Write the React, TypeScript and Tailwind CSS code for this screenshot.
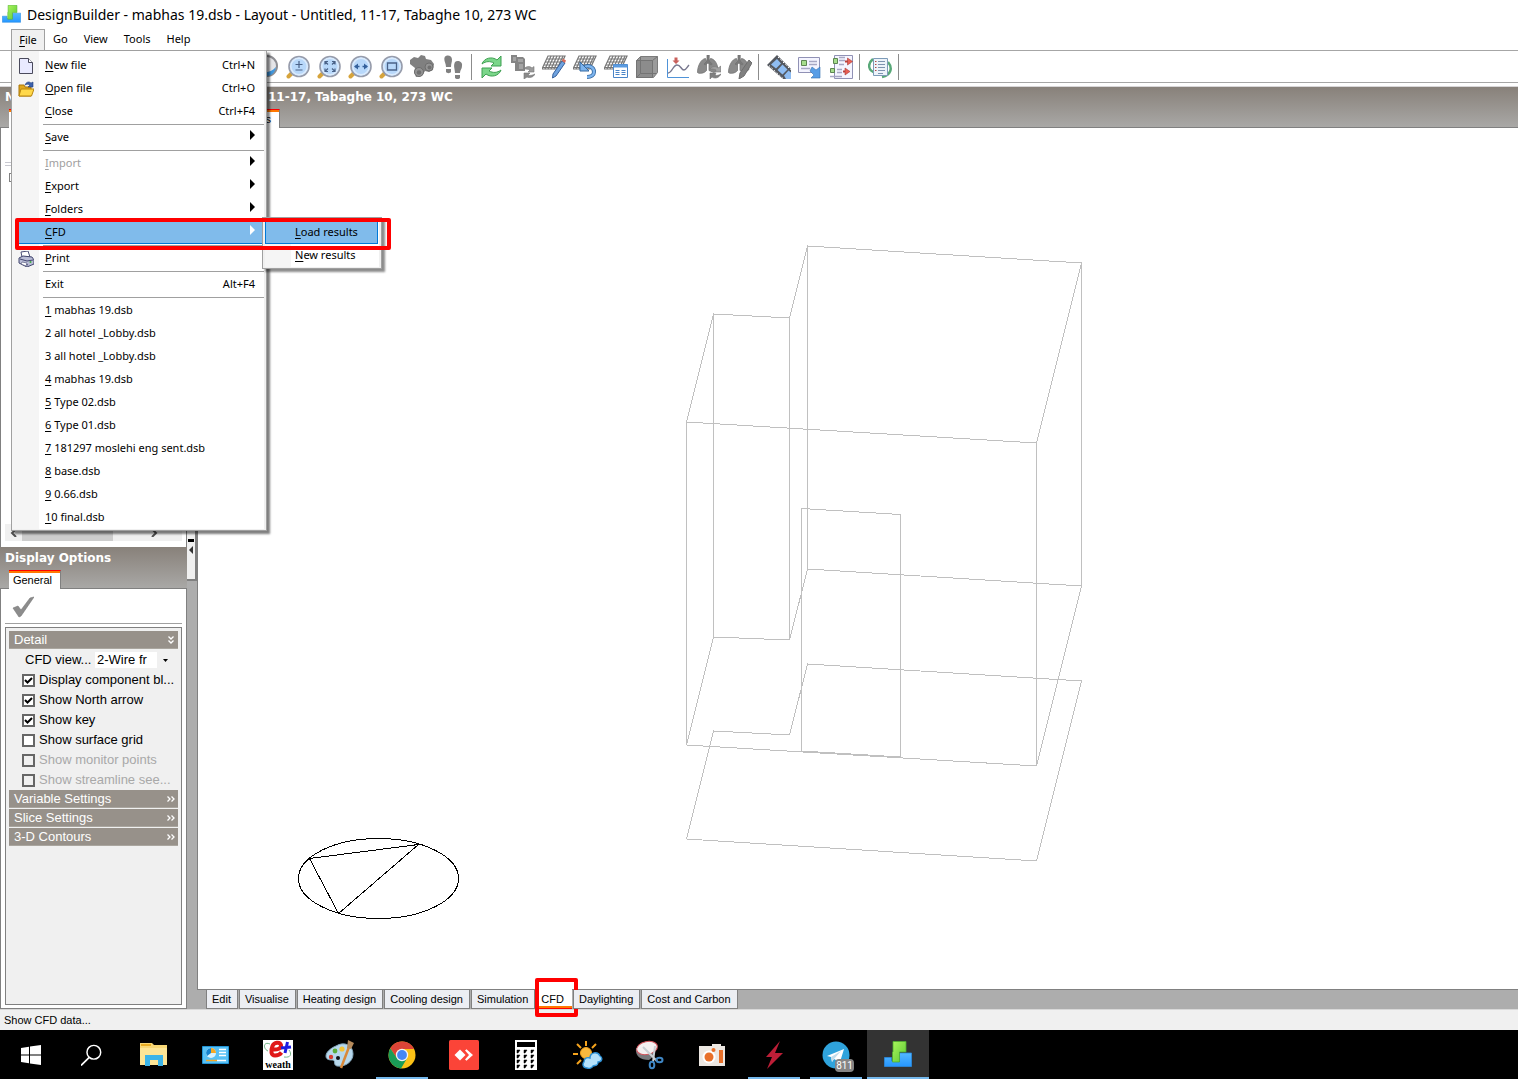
import { useState } from 'react';
import type { ReactNode } from 'react';
import { clsx } from 'clsx';

interface MenuEntry {
  label: string;
  hotkey?: number;
  shortcut?: string;
  submenu?: boolean;
  disabled?: boolean;
  icon?: ReactNode;
}

const Svg = ({ children, size = 'size-6', box = '0 0 24 24' }: { children: ReactNode; size?: string; box?: string }) => (
  <svg viewBox={box} className={clsx('shrink-0', size)} fill="none" aria-hidden="true">
    {children}
  </svg>
);

/* ---------- logos ---------- */

const BlocksLogo = ({ size }: { size: string }) => (
  <Svg size={size} box="0 0 28 28">
    <defs>
      <linearGradient id="blockGreen" x1="0" y1="0" x2="1" y2="1">
        <stop offset="0" stopColor="#aaf55c" />
        <stop offset="1" stopColor="#5cc934" />
      </linearGradient>
      <linearGradient id="blockBlue" x1="0" y1="0" x2="0" y2="1">
        <stop offset="0" stopColor="#55b8ff" />
        <stop offset="1" stopColor="#2596ff" />
      </linearGradient>
    </defs>
    <path d="M.5 16.500h7V20H14v-4h1v-4h12.500v13.500H.5z" fill="url(#blockBlue)" stroke="#2b8ade" strokeWidth=".8" />
    <path d="M9 .5h13V11h-6.500v10H8.500V11H9z" fill="url(#blockGreen)" stroke="#4fae30" strokeWidth=".8" />
  </Svg>
);

/* ---------- menu icons ---------- */

const NewFileIcon = () => (
  <Svg size="size-4" box="0 0 16 16">
    <path d="M1.500 .5h9l4 4v11h-13z" fill="#e9eaff" stroke="#4a4a5c" />
    <path d="M10.500 .5v4h4" fill="#fff" stroke="#4a4a5c" />
  </Svg>
);

const OpenFileIcon = () => (
  <Svg size="size-4" box="0 0 16 16">
    <path d="M1 4h5l1 2h6v9H1z" fill="#e0a81c" stroke="#a87408" />
    <path d="M3 8h13l-2.500 7H1z" fill="#ffd84a" stroke="#b9860f" />
    <path d="M7 4c1-3 4-4 6-2l2-1v5h-5l2-2c-2-1-3-1-5 0z" fill="#3d62ad" stroke="#23427f" strokeWidth=".6" />
  </Svg>
);

const PrintIcon = () => (
  <Svg size="size-4" box="0 0 16 16">
    <path d="M4 6L3 1l7-1 2 6z" fill="#fff" stroke="#4b4f78" />
    <path d="M1 7l4-2 9 1 2 3v4l-7 3-8-4z" fill="#b9bcd6" stroke="#43476f" />
    <path d="M2 8l7 2 6-1M5 12l5 2" stroke="#43476f" />
    <path d="M4 11l5 1-1 3-5-2z" fill="#fff" stroke="#43476f" strokeWidth=".6" />
    <circle cx="12.500" cy="11" r="1" fill="#3fae3f" />
  </Svg>
);

/* ---------- toolbar icons ---------- */

const Lens = ({ children }: { children: ReactNode }) => (
  <Svg>
    <path d="M2.500 21.500L7 17" stroke="#d6a43c" strokeWidth="4" strokeLinecap="round" />
    <circle cx="13" cy="11.500" r="10" fill="#c6e0fb" stroke="#979cab" strokeWidth="1.600" />
    <circle cx="13" cy="11.500" r="8.200" fill="#b8d8fa" stroke="#dcebfc" strokeWidth="1.400" />
    {children}
  </Svg>
);

const Mesh = () => (
  <g stroke="#777" strokeWidth="1.200">
    <path d="M6 1h17l-6 13H0z" fill="#fff" />
    <path d="M5 4h17M3 7h17M2 10h17M1 12.500h17M9 1L3 14M12 1L6 14M15 1L9 14M18 1l-6 13M21 1l-6 13" />
  </g>
);

const Lungs = () => (
  <g fill="#8a8a8a" stroke="#757575" strokeWidth=".8">
    <path d="M8.500 3.500C4 4 .5 11 .5 17.500c1 1.500 7 1 9-2V6z" />
    <path d="M13.500 3.500c4 .5 7 5 7.500 11l-4 3-5-2V6z" />
    <path d="M10 0h2.200v6l3 3-1 1-3.200-2L8 10 7 9l3-3z" fill="#7a7a7a" />
  </g>
);

const toolGroups: { name: string; icon: ReactNode }[][] = [
  [
    {
      name: 'Orbit',
      icon: (
        <Svg>
          <circle cx="12" cy="11" r="10" fill="#e5e5e8" stroke="#8d8d92" strokeWidth="2" />
          <path d="M3 16c6 3 14 1 18-4-1 6-5 9-9 9s-7-2-9-5z" fill="#3f96dc" />
        </Svg>
      ),
    },
    {
      name: 'Zoom',
      icon: (
        <Lens>
          <path d="M13 6v7M9.500 9.500h7M9.500 15h7" stroke="#4a6288" strokeWidth="1.200" />
        </Lens>
      ),
    },
    {
      name: 'Fit',
      icon: (
        <Lens>
          <path d="M8 9.500v-3h3M15 6.500h3v3M18 13.500v3h-3M11 16.500H8v-3M8 6.500l3 3M18 6.500l-3 3M18 16.500l-3-3M8 16.500l3-3" stroke="#4a6288" strokeWidth="1.200" />
        </Lens>
      ),
    },
    {
      name: 'Pan',
      icon: (
        <Lens>
          <path d="M7 11.500h4.500M14.500 11.500H19" stroke="#35619c" strokeWidth="1.600" />
          <path d="M10 8.500l-4 3 4 3zM16 8.500l4 3-4 3z" fill="#35619c" />
        </Lens>
      ),
    },
    {
      name: 'Zoom window',
      icon: (
        <Lens>
          <path d="M8.500 8h9v7h-9z" stroke="#4a6288" strokeWidth="1.300" />
        </Lens>
      ),
    },
    {
      name: 'Find',
      icon: (
        <Svg>
          <path d="M0 5l4-3 4 1 3-3 4 1 1 3 5 1 3 4-1 6-4 2-4-1-3 5-6 1-2-5 1-4-5-4z" fill="#808080" />
          <circle cx="9" cy="17" r="4.500" fill="#949494" stroke="#6d6d6d" />
          <circle cx="19" cy="12" r="4" fill="#949494" stroke="#6d6d6d" />
          <circle cx="9" cy="17.500" r="2.300" fill="#707070" />
          <circle cx="19.500" cy="12.500" r="2" fill="#707070" />
        </Svg>
      ),
    },
    {
      name: 'Walk',
      icon: (
        <Svg>
          <path d="M4 1.500C6-.5 11 0 11 4.500c0 3-1 4-1 7.500H5c0-4-3-7-1-10.500z" fill="#808080" />
          <path d="M5 14h5v3c-1 1.500-4 1.500-5 0z" fill="#808080" />
          <path d="M14 7c2-2 8-1 7 4 0 3-2 4-2 7h-5c0-4-2-7 0-11z" fill="#808080" />
          <path d="M14 20h5v3c-1 1.500-4 1.500-5 0z" fill="#808080" />
        </Svg>
      ),
    },
  ],
  [
    {
      name: 'Update',
      icon: (
        <Svg>
          <path d="M2 9c2-6 10-8 15-4l4-4v10H11l3-3c-4-2-8-2-12 1z" fill="#7bd68a" stroke="#3fa052" />
          <path d="M21 15c-2 6-10 8-15 4l-4 4V13h10l-3 3c4 2 8 2 12-1z" fill="#7bd68a" stroke="#3fa052" />
        </Svg>
      ),
    },
    {
      name: 'Update component',
      icon: (
        <Svg>
          <path d="M0 0h6v2h6l2 2v12H4V8H0z" fill="#858585" />
          <path d="M2 2h3v4H2zM7 4h5v3H7zM8 9h4v5H8z" fill="#a4a4a4" />
          <path d="M13 14c2-3 6-3 8-1l2-1.500v5.500h-6l2-2c-2-1-4-1-6-1z" fill="#9a9a9a" stroke="#777" strokeWidth=".6" />
          <path d="M24 19c-2 4-6 4-8 3l-3 2v-6h6l-2 2c2 1 5 0 7-1z" fill="#8a8a8a" stroke="#777" strokeWidth=".6" />
        </Svg>
      ),
    },
    {
      name: 'Edit grid',
      icon: (
        <Svg>
          <Mesh />
          <path d="M20 6l3 2-9 13-3.500 2 .5-4z" fill="#6fa3e0" stroke="#36619c" />
          <path d="M20 6l3 2 1-2.500L21 3.500z" fill="#d96b5a" />
        </Svg>
      ),
    },
    {
      name: 'Reset grid',
      icon: (
        <Svg>
          <Mesh />
          <path d="M10 13c5-4 11-1 11 4 0 3-3 5-7 5" stroke="#35689f" strokeWidth="4" />
          <path d="M10 13c5-4 11-1 11 4 0 3-3 5-7 5" stroke="#7db4ee" strokeWidth="2.400" />
          <path d="M7 7v9h9z" fill="#7db4ee" stroke="#35689f" />
        </Svg>
      ),
    },
    {
      name: 'Grid table',
      icon: (
        <Svg>
          <Mesh />
          <path d="M9.500 9.500h14v13h-14z" fill="#fff" stroke="#4a85c8" />
          <path d="M9.500 9.500h14v3h-14z" fill="#5b9be0" />
          <path d="M11.500 15.500h4M17.500 15.500h4M11.500 17.500h4M17.500 17.500h4M11.500 19.500h4M17.500 19.500h4" stroke="#4a85c8" />
        </Svg>
      ),
    },
    {
      name: 'Solid',
      icon: (
        <Svg>
          <path d="M1.500 5.500l4-4h17v16l-4 5h-17z" fill="#9b9b9b" stroke="#7c7c7c" />
          <path d="M1.500 5.500h16v17h-16z" fill="#8c8c8c" stroke="#747474" />
          <path d="M17.500 5.500l5-4M5.500 2v16.500h16M5.500 18.500l-4 4" stroke="#747474" />
        </Svg>
      ),
    },
    {
      name: 'Chart',
      icon: (
        <Svg>
          <path d="M1.500 4v18.500H23" stroke="#4f93d8" />
          <path d="M2 18c4 0 5-8 9-8s4 5 7 5c2 0 3-3 5-5" stroke="#77778e" strokeWidth="1.400" />
          <path d="M8.500 2.500h3v3h2L10 9 6.500 5.500h2z" fill="#c9605c" />
        </Svg>
      ),
    },
    {
      name: 'Update ventilation',
      icon: (
        <Svg>
          <Lungs />
          <path d="M13 14c2-3 6-3 8-1l3-2v6h-6l1-2c-2-1-4-1-6-1z" fill="#a2a2a2" stroke="#777" strokeWidth=".6" />
          <path d="M24 19c-2 4-6 5-9 3l-2 2v-6h6l-1 2c2 1 4 0 6-1z" fill="#808080" stroke="#707070" strokeWidth=".6" />
        </Svg>
      ),
    },
    {
      name: 'Edit ventilation',
      icon: (
        <Svg>
          <Lungs />
          <path d="M21 5l3 3-8 13-5 3 1-6z" fill="#808080" stroke="#6e6e6e" />
        </Svg>
      ),
    },
  ],
  [
    {
      name: 'Movie',
      icon: (
        <Svg>
          <path d="M10 0l14 14v10h-8L0 10z" fill="#54585f" />
          <path d="M10 4l4 4.500L9 13.500 4 9.500zM15.500 9.500l5 5-5 5-5-4.500zM21.500 15.500l2.500 2V24h-5l-2-3.500z" fill="#8fbdf2" />
          <path d="M11 2l13 13M2 10.500L16 23.500" stroke="#fff" strokeDasharray="1.500 2" />
        </Svg>
      ),
    },
    {
      name: 'Export view',
      icon: (
        <Svg>
          <path d="M.5 2.500h21v15H.5z" fill="#f4f4ff" stroke="#9091b5" />
          <path d="M3.500 5.500h5v5h-5z" fill="#a5dd8c" stroke="#5d8552" />
          <path d="M11 6.500h8M11 9.500h8M3 13.500h9" stroke="#a7a7c4" strokeWidth="1.500" />
          <path d="M14 12l4 3 4-3v11H13l3-3-4-4z" fill="#579de6" stroke="#3470b0" strokeWidth=".6" />
        </Svg>
      ),
    },
    {
      name: 'Compare',
      icon: (
        <Svg>
          <path d="M5.500 .5h18v23h-18z" fill="#f5f5ff" stroke="#9091b5" />
          <path d="M4.500 3.500h4v5h-4zM1.500 13.500h4v4h-4z" fill="#a5dd8c" stroke="#5d8552" />
          <path d="M10 2.500h6M10 5.500h6M10 9.500h5M8 14.500h5M8 17.500h5M1 21.500h12" stroke="#a7a7c4" strokeWidth="1.500" />
          <path d="M14 16.500h3M16 6.500h3" stroke="#b9403c" strokeWidth="2" />
          <path d="M18.500 3l5 3.500-5 3.500zM16 13l5 3.500-5 3.500z" fill="#ea5f55" stroke="#a83a36" strokeWidth=".6" />
        </Svg>
      ),
    },
  ],
  [
    {
      name: 'Report',
      icon: (
        <Svg>
          <path d="M5 4c-6 5-5 12 3 14M20 7c5 6 3 13-6 15" stroke="#58a878" strokeWidth="2.500" />
          <path d="M5.500 3.500h14v17h-14z" fill="#edf3fa" stroke="#7d9bb8" />
          <path d="M10 6.500h7M10 9.500h7M10 12.500h7M10 15.500h7M10 18.500h5" stroke="#7d93b0" />
          <path d="M7 6.500h1.500M7 9.500h1.500M7 12.500h1.500M7 15.500h1.500" stroke="#b04848" />
        </Svg>
      ),
    },
  ],
];

/* ---------- data ---------- */

const fileMenu: MenuEntry[][] = [
  [
    { label: 'New file', hotkey: 1, shortcut: 'Ctrl+N', icon: <NewFileIcon /> },
    { label: 'Open file', hotkey: 1, shortcut: 'Ctrl+O', icon: <OpenFileIcon /> },
    { label: 'Close', hotkey: 1, shortcut: 'Ctrl+F4' },
  ],
  [{ label: 'Save', hotkey: 1, submenu: true }],
  [
    { label: 'Import', hotkey: 1, submenu: true, disabled: true },
    { label: 'Export', hotkey: 1, submenu: true },
    { label: 'Folders', hotkey: 1, submenu: true },
    { label: 'CFD', hotkey: 1, submenu: true },
  ],
  [{ label: 'Print', hotkey: 1, icon: <PrintIcon /> }],
  [{ label: 'Exit', shortcut: 'Alt+F4' }],
  [
    { label: '1 mabhas 19.dsb', hotkey: 1 },
    { label: '2 all hotel _Lobby.dsb' },
    { label: '3 all hotel _Lobby.dsb' },
    { label: '4 mabhas 19.dsb', hotkey: 1 },
    { label: '5 Type 02.dsb', hotkey: 1 },
    { label: '6 Type 01.dsb', hotkey: 1 },
    { label: '7 181297 moslehi eng sent.dsb', hotkey: 1 },
    { label: '8 base.dsb', hotkey: 1 },
    { label: '9 0.66.dsb', hotkey: 1 },
    { label: '10 final.dsb', hotkey: 1 },
  ],
];

const displayOptions = [
  { label: 'Display component bl...', checked: true },
  { label: 'Show North arrow', checked: true },
  { label: 'Show key', checked: true },
  { label: 'Show surface grid', checked: false },
  { label: 'Show monitor points', checked: false, disabled: true },
  { label: 'Show streamline see...', checked: false, disabled: true },
];

const viewTabs = ['Edit', 'Visualise', 'Heating design', 'Cooling design', 'Simulation', 'CFD', 'Daylighting', 'Cost and Carbon'];

/* ---------- menu ---------- */

const HotLabel = ({ label, hotkey = 0 }: { label: string; hotkey?: number }) => (
  <span className="whitespace-pre">
    <span className="underline underline-offset-2">{label.slice(0, hotkey)}</span>
    {label.slice(hotkey)}
  </span>
);

const CfdSubmenu = () => (
  <div className="absolute -top-1 left-[250px] z-10 w-[120px] border border-[#a0a0a0] bg-[#f0f0f0] px-[2px] pb-px pt-[3px] text-black shadow-[3px_3px_2px_rgba(0,0,0,0.45)]">
    <div className="bg-[linear-gradient(90deg,#f5f5f5_26px,#fff_26px)]">
      <button className="flex h-[23px] w-[113px] items-center border border-[#0078d7] bg-[#80bbeb] pl-[29px]">
        <HotLabel label="Load results" hotkey={1} />
      </button>
      <button className="flex h-[23px] w-full items-center pl-[30px]">
        <HotLabel label="New results" hotkey={1} />
      </button>
    </div>
  </div>
);

const MenuRow = ({ entry, active }: { entry: MenuEntry; active: boolean }) => (
  <div className={clsx('relative', active && 'pl-[6px]')}>
    <button
      disabled={entry.disabled}
      className={clsx(
        'flex h-[23px] w-full items-center pr-[9px]',
        entry.disabled && 'text-[#a0a0a0]',
        active && 'bg-[#80bbeb] shadow-[inset_0_-1px_0_#0078d7]'
      )}
    >
      <span className={clsx('flex shrink-0 justify-center pr-[5px]', active ? 'w-[27px]' : 'w-[33px]')}>{entry.icon}</span>
      <HotLabel label={entry.label} hotkey={entry.hotkey} />
      <span className="ml-auto">{entry.shortcut}</span>
      {entry.submenu && (
        <svg viewBox="0 0 5 10" className={clsx('mb-[6px] h-[10px] w-[5px]', active ? 'fill-white' : 'fill-black')} aria-hidden="true">
          <path d="M0 0l5 5-5 5z" />
        </svg>
      )}
    </button>
    {active && (
      <>
        <CfdSubmenu />
        <div className="pointer-events-none absolute -top-[3px] left-[3px] z-20 h-8 w-[376px] rounded-[2px] border-4 border-[#ff0000]" />
      </>
    )}
  </div>
);

const FileMenu = () => (
  <div className="absolute -left-px top-full z-30 w-[256px] border border-[#a0a0a0] bg-[#f0f0f0] pb-px pr-[2px] shadow-[3px_3px_2px_rgba(0,0,0,0.5)]">
    <div className="bg-[linear-gradient(90deg,#f5f5f5_27px,#fff_27px)] pt-[3px]">
      {fileMenu.map((group, i) => (
        <div key={i}>
          {i > 0 && (
            <div className="h-[3px] pl-[31px] pt-px">
              <div className="h-px bg-[#a0a0a0]" />
            </div>
          )}
          {group.map((entry) => (
            <MenuRow key={entry.label} entry={entry} active={entry.label === 'CFD'} />
          ))}
        </div>
      ))}
    </div>
  </div>
);

const MenuBar = () => (
  <nav className="flex h-[21px] items-stretch pl-[11px] font-['Noto_Sans','Open_Sans',sans-serif] text-[11px]">
    <div className="relative border border-b-0 border-[#a0a0a0] bg-[#f0f0f0]">
      <button className="flex h-5 w-8 items-center justify-center">
        <HotLabel label="File" hotkey={1} />
      </button>
      <FileMenu />
    </div>
    {['Go', 'View', 'Tools', 'Help'].map((item) => (
      <button key={item} className="px-2">
        {item}
      </button>
    ))}
  </nav>
);

const Toolbar = () => (
  <div className="border-b border-[#d8d6d8] pb-[3px]">
    <div className="flex h-[33px] items-center border-y border-[#a6a6a6] pl-[251px]">
      {toolGroups.map((group, i) => (
        <div key={i} className="flex items-center">
          {group.map((tool) => (
            <button key={tool.name} title={tool.name} className="flex w-[31px] justify-center">
              {tool.icon}
            </button>
          ))}
          <div className="w-2 pl-[3px]">
            <div className="h-[26px] w-px bg-[#8c8c8c]" />
          </div>
        </div>
      ))}
    </div>
  </div>
);

/* ---------- header ---------- */

const OrangeTab = ({ children, className }: { children?: ReactNode; className?: string }) => (
  <button
    className={clsx(
      "border-t border-[#ff0000] bg-white text-[11px] shadow-[inset_0_2px_0_#ff7800] font-['Liberation_Sans',sans-serif]",
      className
    )}
  >
    {children}
  </button>
);

const HeaderBar = () => (
  <div className="flex h-[41px] border-b border-[#808080] bg-linear-to-b from-[#88817a] to-[#a9a8a6] font-['DejaVu_Sans',sans-serif] text-xs font-bold text-white">
    <div className="flex w-[197px] flex-col justify-between pl-[5px]">
      <h2 className="leading-5">N</h2>
      <OrangeTab className="-mb-px ml-1 h-[19px] w-20" />
    </div>
    <div className="flex flex-1 flex-col justify-between">
      <h2 className="pl-[71px] leading-5">11-17, Tabaghe 10, 273 WC</h2>
      <OrangeTab className="-mb-px ml-2 h-[19px] w-[75px] border-r border-r-[#808080] pr-2 text-right font-normal text-black">s</OrangeTab>
    </div>
  </div>
);

/* ---------- left column ---------- */

const Chevrons = ({ down = false }: { down?: boolean }) => (
  <svg viewBox="0 0 8 8" className={clsx('size-2', down && 'rotate-90')} fill="none" stroke="#fff" strokeWidth="1.300" aria-hidden="true">
    <path d="M.5 1.500L3 4 .5 6.500M4.500 1.500L7 4 4.500 6.500" />
  </svg>
);

const Section = ({ title, open = false }: { title: string; open?: boolean }) => (
  <button className="mb-px flex h-[18px] w-full items-center justify-between bg-[#97918a] pl-[5px] pr-[3px] text-white shadow-[inset_0_-1px_0_#aaa69f]">
    {title}
    <Chevrons down={open} />
  </button>
);

const OptionRow = ({ label, checked, disabled }: { label: string; checked: boolean; disabled?: boolean }) => {
  const [on, setOn] = useState(checked);

  return (
    <label className={clsx('flex h-5 items-center gap-1 whitespace-nowrap pl-[13px]', disabled && 'text-[#a8a8a8]')}>
      <span className="relative size-[13px]">
        <input
          type="checkbox"
          checked={on}
          disabled={disabled}
          onChange={() => setOn(!on)}
          className="block size-[13px] appearance-none border-2 border-[#666] bg-white disabled:bg-[#f0f0f0]"
        />
        {on && (
          <svg viewBox="0 0 13 13" className="pointer-events-none absolute inset-0 size-[13px]" fill="none" stroke="#000" strokeWidth="2" aria-hidden="true">
            <path d="M3 6l2.500 2.500L10 4" />
          </svg>
        )}
      </span>
      {label}
    </label>
  );
};

const NavigatorPane = () => (
  <div className="flex h-[419px] flex-col border-x border-[#808080] bg-white pb-[6px]">
    <div className="ml-1 mt-[34px] h-1 border-y border-[#c8c8d0]" />
    <div className="ml-2 mt-[7px] size-[9px] border border-[#808080]" />
    <div className="mx-1 mt-auto flex h-[17px] items-center bg-[#f0f0f0] text-[#505050]">
      <button className="w-[17px]" aria-label="Scroll left">
        <svg viewBox="0 0 8 8" className="mx-auto size-2" fill="none" stroke="currentColor" strokeWidth="2" aria-hidden="true">
          <path d="M6 0L2 4l4 4" />
        </svg>
      </button>
      <div className="h-full w-[91px] bg-[#cdcdcd]" />
      <button className="ml-auto mr-5 w-[17px]" aria-label="Scroll right">
        <svg viewBox="0 0 8 8" className="mx-auto size-2" fill="none" stroke="currentColor" strokeWidth="2" aria-hidden="true">
          <path d="M2 0l4 4-4 4" />
        </svg>
      </button>
    </div>
  </div>
);

const DisplayOptions = () => (
  <section className="flex flex-1 flex-col">
    <div className="flex h-[42px] flex-col justify-between border-b border-[#808080] bg-linear-to-b from-[#88817a] to-[#a9a8a6] pl-[5px]">
      <h2 className="font-['DejaVu_Sans',sans-serif] text-xs font-bold leading-[22px] text-white">Display Options</h2>
      <OrangeTab className="-mb-px ml-1 h-[19px] w-[52px] border-r border-r-[#808080] pr-1 text-black">General</OrangeTab>
    </div>
    <div className="flex flex-1 flex-col border-x border-b border-[#808080] bg-white px-1 pb-[3px]">
      <div className="mb-[3px] h-[35px] border-b border-[#a0a0a0] pl-[7px] pt-[7px]">
        <svg viewBox="0 0 22 22" className="size-[22px]" aria-hidden="true">
          <path d="M1 12l5-2 3 4L18 2l4-1L9 20l-2 1z" fill="#8c8c8c" stroke="#777" strokeWidth=".6" />
        </svg>
      </div>
      <div className="flex-1 border border-[#808080] bg-[#f0f0f0] px-[3px] pt-[3px] font-['Liberation_Sans',sans-serif] text-[13px]">
        <Section title="Detail" open />
        <div className="flex h-5 items-center justify-between pl-4 pr-1">
          <label htmlFor="cfd-view">CFD view...</label>
          <div className="relative h-4 w-[79px] bg-white">
            <select id="cfd-view" className="block h-4 w-full appearance-none pl-[2px] pr-[18px] leading-4 outline-none">
              <option>2-Wire fr</option>
            </select>
            <span className="pointer-events-none absolute right-0 top-0 flex h-4 w-[17px] items-center justify-center bg-[#f0f0f0]">
              <svg viewBox="0 0 5 3" className="h-[3px] w-[5px]" aria-hidden="true">
                <path d="M0 0h5L2.500 3z" />
              </svg>
            </span>
          </div>
        </div>
        {displayOptions.map((option) => (
          <OptionRow key={option.label} {...option} />
        ))}
        <Section title="Variable Settings" />
        <Section title="Slice Settings" />
        <Section title="3-D Contours" />
      </div>
    </div>
  </section>
);

const Splitter = () => (
  <div className="w-[10px] bg-[#adadad] pt-[372px]">
    <button className="flex h-[81px] w-full flex-col items-center border-b-2 border-r-2 border-[#808080] bg-[#f0f0f0] pt-[39px]" aria-label="Collapse panel">
      <span className="h-[3px] w-[6px] bg-black" />
      <svg viewBox="0 0 4 8" className="mt-1 h-2 w-1 fill-[#333]" aria-hidden="true">
        <path d="M4 0L0 4l4 4z" />
      </svg>
    </button>
  </div>
);

/* ---------- canvas ---------- */

const Canvas = () => (
  <svg className="min-h-0 w-full flex-1" fill="none" shapeRendering="crispEdges" role="img" aria-label="CFD wireframe">
    <g transform="translate(-197.500 -128)" stroke="#c0c0c0">
      <path d="M713 314l76 4 18-72 274 17-45 180-350-21z" />
      <path d="M713 637l76 3 18-71 274 17-45 180-350-21z" />
      <path d="M713 731l76 4 18-71 274 17-45 180-350-22z" />
      <path d="M713 314v323M789 318v322M807 246v323M1081 263v323M1036 443v323M686 422v323" />
      <path d="M801 508.500l99 6V757l-99-6z" />
    </g>
    <g transform="translate(-197.500 -127.500)" stroke="#000">
      <ellipse cx="378" cy="878" rx="80" ry="40" />
      <path d="M309 858l109-14-80 69z" />
    </g>
  </svg>
);

const ViewTabs = () => {
  const [current, setCurrent] = useState('CFD');

  return (
    <div className="flex h-5 items-stretch gap-px border-t border-[#808080] bg-[#adadad] pl-[9px] font-['Liberation_Sans',sans-serif] text-[11px]">
      {viewTabs.map((tab) => (
        <button
          key={tab}
          onClick={() => setCurrent(tab)}
          className={clsx(
            'relative pl-[5px]',
            tab === current
              ? '-mt-px border-b border-[#ff0000] bg-white pr-2 pt-[2px] shadow-[inset_0_-2px_0_#ff7800]'
              : 'border border-t-0 border-[#808080] bg-[#eceef3] pr-[6px] pt-px'
          )}
        >
          {tab}
          {tab === 'CFD' && <span className="pointer-events-none absolute -left-px -top-[11px] h-[39px] w-[43px] rounded-[2px] border-4 border-[#ff0000]" />}
        </button>
      ))}
    </div>
  );
};

/* ---------- taskbar ---------- */

const taskbarItems: { name: string; icon: ReactNode; running?: boolean; focused?: boolean }[] = [
  {
    name: 'Search',
    icon: (
      <Svg size="size-[22px]">
        <circle cx="14" cy="9" r="7.500" stroke="#fff" strokeWidth="1.600" />
        <path d="M9 14.500L0 23.500" stroke="#fff" strokeWidth="1.800" />
      </Svg>
    ),
  },
  {
    name: 'File Explorer',
    icon: (
      <Svg size="size-7" box="0 0 28 28">
        <path d="M0 2h12l2 2h13v20H0z" fill="#f8d775" />
        <path d="M1 3h10v2H1z" fill="#e8ac24" />
        <path d="M0 7h27v17H0z" fill="#fde596" />
        <path d="M5 25V14h18v11h-5v-6h-8v6z" fill="#3cb4e8" />
      </Svg>
    ),
  },
  {
    name: 'Control Panel',
    icon: (
      <Svg size="size-7" box="0 0 28 28">
        <path d="M.5 5.500h26v17H.5z" fill="#57c0f5" stroke="#2193d4" />
        <circle cx="9" cy="12" r="5" fill="#d8f1fd" />
        <path d="M9 12V7a5 5 0 0 0-4 8z" fill="#1683ce" />
        <path d="M9 12V7a5 5 0 0 1 5 5z" fill="#f6a924" />
        <path d="M17 8.500h7M17 11.500h7M17 14.500h7" stroke="#fff" strokeWidth="1.500" />
        <path d="M4 19.500h11" stroke="#f6a924" strokeWidth="1.500" />
        <path d="M15 19.500h9" stroke="#fff" strokeWidth="1.500" />
      </Svg>
    ),
  },
  {
    name: 'Weather data',
    icon: (
      <span className="flex size-[30px] flex-col items-center justify-between overflow-hidden bg-white font-['Liberation_Serif',serif] text-[10px] font-bold leading-[10px] text-black">
        <svg viewBox="0 0 30 20" className="h-5 w-[30px] shrink-0" fill="none" aria-hidden="true">
          <path d="M7 4C0 1 0 9 5 11M21 17c7 1 8-3 5-7" stroke="#74b588" />
          <path d="M9.500 9.500c5 .5 9-1 8.500-4.500-1-3.500-7-3-8.500 1C7.500 11 8 15.500 12 15.500c3 0 5-1 6.500-3" stroke="#e01818" strokeWidth="4" />
          <path d="M24.500 2L22 13M18 8l10-1" stroke="#1c1ce0" strokeWidth="3" />
        </svg>
        weath
      </span>
    ),
  },
  {
    name: 'Paint',
    icon: (
      <Svg size="size-[30px]" box="0 0 30 30">
        <path d="M11 6c8-5 17-1 17 8 0 8-8 13-16 12-4-1-1-5-4-6-3 0-7 0-7-4 0-4 5-8 10-10z" fill="#b7d8ec" stroke="#86a9bd" />
        <circle cx="6" cy="17" r="2.200" fill="#d83c30" />
        <circle cx="10" cy="11" r="2.400" fill="#5aad3b" />
        <circle cx="17" cy="9" r="2.600" fill="#f5c437" />
        <circle cx="13" cy="18" r="2" fill="#101418" />
        <path d="M24 7l-8 21" stroke="#d98839" strokeWidth="2.500" />
        <path d="M23 0l6 3-3 6-4-1z" fill="#b58a5b" />
      </Svg>
    ),
  },
  {
    name: 'Chrome',
    running: true,
    icon: (
      <Svg size="size-7" box="0 0 28 28">
        <circle cx="14" cy="14" r="13.500" fill="#fbc116" />
        <path d="M14 8h12.100A13.500 13.500 0 0 0 2.300 7.250L8.800 17z" fill="#dc4437" />
        <path d="M2.300 7.250A13.500 13.500 0 0 0 13 27.460L19.200 17l-10.400 0z" fill="#1a9c57" />
        <circle cx="14" cy="14" r="6.200" fill="#f3f3f3" />
        <circle cx="14" cy="14" r="4.900" fill="#4587f3" />
      </Svg>
    ),
  },
  {
    name: 'AnyDesk',
    icon: (
      <Svg size="size-[30px]" box="0 0 30 30">
        <rect width="30" height="30" rx="1.500" fill="#fb4438" />
        <path d="M11 9.500l5.500 5.500-5.500 5.500L5.500 15z" fill="#fff" />
        <path d="M16 10.500l1.500-1.200L24 15l-6.500 5.700-1.500-1.200L20 15z" fill="#fff" />
      </Svg>
    ),
  },
  {
    name: 'Calculator',
    icon: (
      <Svg size="size-[30px]" box="0 0 30 30">
        <path d="M4 0h22v30H4z" fill="#fff" />
        <path d="M6 2h18v5H6z" fill="#000" />
        <path
          d="M6 10h3l-2 3H6zM13 10h3l-2 3h-1zM20 10h3l-2 3h-1zM6 15h3l-2 3H6zM13 15h3l-2 3h-1zM20 15h3l-2 3h-1zM6 20h3l-2 3H6zM13 20h3l-2 3h-1zM20 20h3l-2 3h-1zM6 25h3l-2 3H6zM13 25h3l-2 3h-1zM20 25h3l-2 3h-1z"
          fill="#000"
          stroke="#000"
          strokeWidth=".5"
        />
      </Svg>
    ),
  },
  {
    name: 'Weather',
    icon: (
      <Svg size="size-[30px]" box="0 0 30 30">
        <path d="M13 1v5M4 4l4 4M0 14h5M4 24l4-4M23 4l-4 4" stroke="#f5a31c" strokeWidth="2" />
        <circle cx="13" cy="13" r="5.500" fill="#f9b93e" stroke="#f5a31c" />
        <path d="M14 28c-4 0-5-4-3-6 0-4 3-5 6-4 0-6 8-7 10-2 3 2 2 6-2 6 0 4-2 3-5 4-1 2-4 3-6 2z" fill="#b5e2fb" stroke="#2e91d6" strokeWidth="1.400" />
      </Svg>
    ),
  },
  {
    name: 'Snipping Tool',
    icon: (
      <Svg size="size-[30px]" box="0 0 30 30">
        <path d="M1 8c-1 8 4 12 13 12l5-4V8z" fill="#77787c" />
        <ellipse cx="12" cy="8" rx="10.500" ry="6.500" transform="rotate(-12 12 8)" fill="#f3eff0" stroke="#d3545c" />
        <path d="M8 7l14 14M20 6l-2 16" stroke="#c9ced3" strokeWidth="2" />
        <ellipse cx="24.500" cy="20" rx="3" ry="2.300" stroke="#3f86c4" strokeWidth="2" />
        <ellipse cx="17" cy="25" rx="2.300" ry="3.300" stroke="#3f86c4" strokeWidth="2" />
      </Svg>
    ),
  },
  {
    name: 'Screen recorder',
    icon: (
      <Svg size="size-7" box="0 0 28 28">
        <path d="M1 5h13V3h9v2h4v20H1z" fill="#ece7e2" />
        <circle cx="11" cy="16" r="6.500" fill="#fff" />
        <circle cx="11" cy="16" r="4.500" fill="#e8702a" />
        <circle cx="15.500" cy="9" r="2" fill="#e8702a" />
        <path d="M21 9h4v13h-4z" fill="#e8702a" />
      </Svg>
    ),
  },
  {
    name: 'Power',
    running: true,
    icon: (
      <Svg size="size-7" box="0 0 28 28">
        <path d="M20 0L6 16h6L7 28l16-16h-8z" fill="#bd1e37" />
      </Svg>
    ),
  },
  {
    name: 'Telegram',
    running: true,
    icon: (
      <span className="relative">
        <Svg size="size-7" box="0 0 28 28">
          <circle cx="14" cy="14" r="13.500" fill="#2fa3dc" />
          <path d="M5 15l17-7-4 13-6-3-2 3-1-5z" fill="#fff" />
          <path d="M9 16l10-6-7 8-2 3z" fill="#c3dcea" />
        </Svg>
        <span className="absolute -right-1 top-[18px] rounded-[4px] bg-[#858585] px-px font-['Roboto',sans-serif] text-[10px] leading-[13px] text-white">811</span>
      </span>
    ),
  },
  { name: 'DesignBuilder', running: true, focused: true, icon: <BlocksLogo size="size-7" /> },
];

const Taskbar = () => (
  <footer className="flex h-[49px] bg-black">
    <button title="Start" className="flex w-[61px] items-center justify-center">
      <Svg size="size-5" box="0 0 20 20">
        <path d="M0 3l8-1.200V9.500H0zM9 1.600L20 0v9.500H9zM0 10.500h8v7.800L0 17zM9 10.500h11V20L9 18.400z" fill="#fff" />
      </Svg>
    </button>
    {taskbarItems.map((item) => (
      <button key={item.name} title={item.name} className={clsx('relative flex w-[62px] items-center justify-center', item.focused && 'bg-[#333]')}>
        {item.icon}
        {item.running && <span className={clsx('absolute bottom-0 h-[2px] bg-[#76b9ed]', item.focused ? 'inset-x-0' : 'inset-x-[5px]')} />}
      </button>
    ))}
  </footer>
);

export default function App() {
  return (
    <div className="flex min-h-screen flex-col bg-white text-black">
      <header className="flex h-[29px] items-center gap-[6px] pl-[2px] font-['Noto_Sans','Open_Sans',sans-serif]">
        <BlocksLogo size="size-[19px]" />
        <h1 className="text-sm">DesignBuilder - mabhas 19.dsb - Layout - Untitled, 11-17, Tabaghe 10, 273 WC</h1>
      </header>
      <MenuBar />
      <Toolbar />
      <HeaderBar />
      <main className="flex flex-1">
        <aside className="flex w-[187px] flex-col">
          <NavigatorPane />
          <DisplayOptions />
        </aside>
        <Splitter />
        <div className="flex flex-1 flex-col">
          <div className="flex flex-1 flex-col border-l border-[#808080]">
            <Canvas />
          </div>
          <ViewTabs />
        </div>
      </main>
      <div className="flex h-[21px] items-center border-t border-[#d8d8d8] bg-[#f0f0f0] pl-1 font-['Liberation_Sans',sans-serif] text-[11px]">Show CFD data...</div>
      <Taskbar />
    </div>
  );
}
